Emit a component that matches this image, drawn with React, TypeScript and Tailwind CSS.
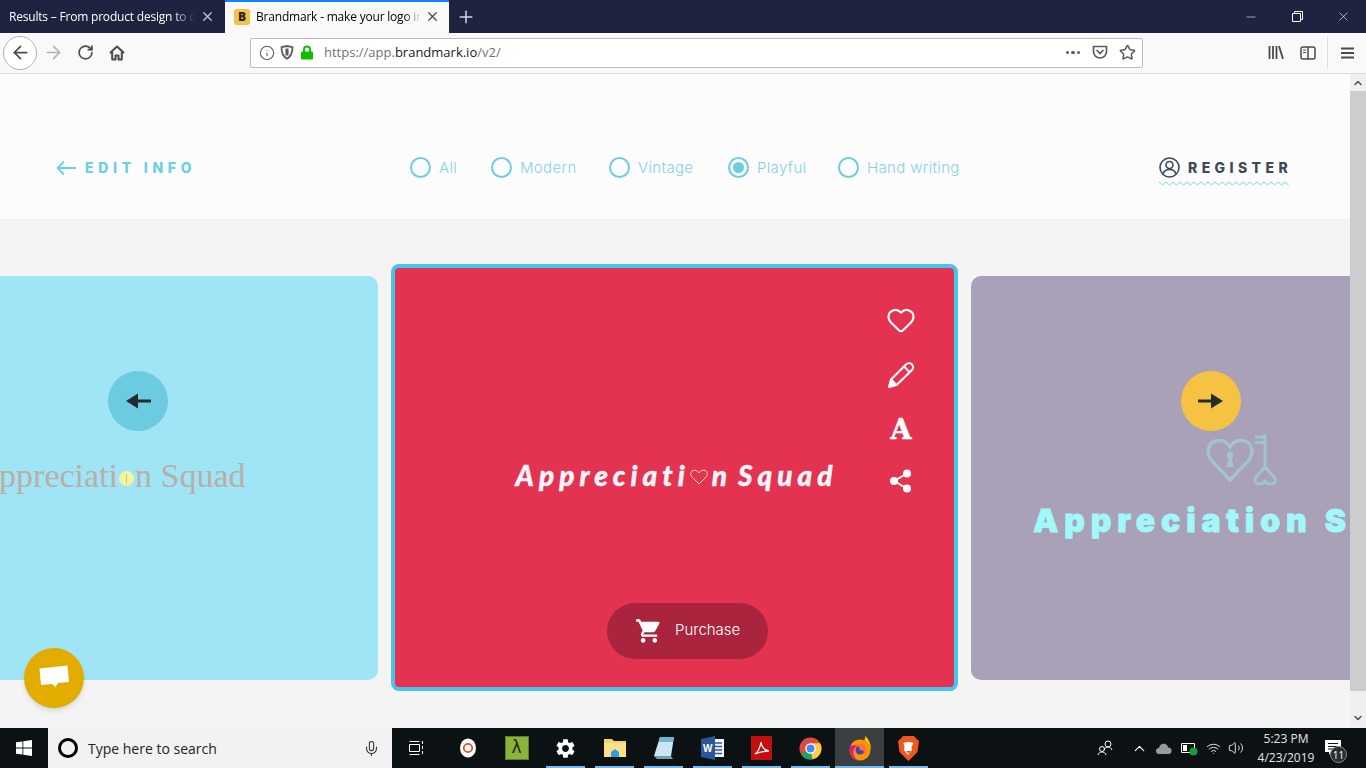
import React from "react";
import { MdShoppingCart, MdSettings } from "react-icons/md";
import { ArrowLeft, ArrowRight, RotateCw, X, Plus, Minus, Info, Heart, Star, ChevronUp, Mic, Volume2, Wifi } from "lucide-react";

const BODY = "font-['Inter','Liberation_Sans',sans-serif]";

const ArrowButton = ({ dir, className }: { dir: "left" | "right"; className: string }) => (
  <div className={`absolute top-[95px] flex h-[60px] w-[60px] items-center justify-center rounded-full ${className}`}>
    <svg width="26" height="18" viewBox="0 0 26 18" className={dir === "left" ? "rotate-180" : ""}>
      <path d="M1 9h14" stroke="#252a31" strokeWidth="3" strokeLinecap="round" />
      <path d="M13 1.5 25 9l-12 7.5z" fill="#252a31" />
    </svg>
  </div>
);

const RadioOption = ({ label, checked, className }: { label: string; checked?: boolean; className: string }) => (
  <div className={`flex items-center ${className}`}>
    <span className="flex h-[21px] w-[21px] shrink-0 items-center justify-center rounded-full border-[2.5px] border-[#6dcde0]">
      {checked && <span className="h-[11px] w-[11px] rounded-full bg-[#6dcde0]" />}
    </span>
    <span className="ml-[8px] whitespace-nowrap pt-[2px] text-[15px] font-light tracking-[0.35px] text-[#86d3e4]">{label}</span>
  </div>
);

const TaskIcon = ({ children, active, open }: { children: React.ReactNode; active?: boolean; open?: boolean }) => (
  <div className={`relative flex h-full w-[49px] items-center justify-center ${active ? "bg-[#3b3f42]" : ""}`}>
    {children}
    {open && <span className={`absolute bottom-0 h-[2px] bg-[#76b9ed] ${active ? "inset-x-0" : "left-[5px] right-[5px]"}`} />}
  </div>
);

const ToolButton = ({ children }: { children: React.ReactNode }) => (
  <div className="flex h-[32px] w-[32px] items-center justify-center text-[#4a4a4f]">{children}</div>
);

const TopBar = () => (
  <div className="flex h-[33px] shrink-0 bg-[#202340] text-[12px] font-['Open_Sans',sans-serif]">
    <div className="relative flex w-[225px] items-center pl-[9px] tracking-[-0.2px] text-white">
      <span className="w-[186px] overflow-hidden whitespace-nowrap [mask-image:linear-gradient(to_right,black_88%,transparent)]">
        Results – From product design to de
      </span>
      <X size={15} strokeWidth={2} className="absolute left-[200px] text-[#c8c9d2]" />
    </div>
    <div className="relative flex w-[224px] items-center border-t-2 border-[#0a84ff] bg-[#f9f9fa] pb-[2px] pl-[9px] tracking-[-0.2px] text-black">
      <span className="flex h-[16px] w-[16px] items-center justify-center rounded-[3px] bg-[#f5c242] text-[12px] font-black text-[#252a31]">B</span>
      <span className="ml-[6px] w-[165px] overflow-hidden whitespace-nowrap [mask-image:linear-gradient(to_right,black_90%,transparent)]">
        Brandmark - make your logo in
      </span>
      <X size={15} strokeWidth={2} className="absolute left-[200px] text-[#4a4a4f]" />
    </div>
    <div className="flex w-[34px] items-center justify-center text-[#d4d5dc]">
      <Plus size={20} strokeWidth={1.8} />
    </div>
    <div className="ml-auto flex items-center text-white">
      <div className="flex w-[46px] justify-center"><Minus size={14} strokeWidth={1} /></div>
      <div className="flex w-[46px] justify-center">
        <svg width="11" height="11" viewBox="0 0 11 11" fill="none" stroke="white">
          <path d="M.5 2.5h8v8h-8zM2.5 2.5v-2h8v8h-2" />
        </svg>
      </div>
      <div className="flex w-[46px] justify-center"><X size={15} strokeWidth={1} /></div>
    </div>
  </div>
);

const NavBar = () => (
  <div className="flex h-[41px] shrink-0 items-center border-b border-[#dcdcdc] bg-[#f9f9fa] pb-[1px]">
    <div className="ml-[3px] flex h-[34px] w-[34px] items-center justify-center rounded-full border border-[#b1b1b1] bg-white text-[#4a4a4f]">
      <ArrowLeft size={21} strokeWidth={2} />
    </div>
    <ToolButton><ArrowRight size={21} strokeWidth={1.8} className="text-[#b3b3b5]" /></ToolButton>
    <ToolButton><RotateCw size={17} strokeWidth={2.4} /></ToolButton>
    <ToolButton>
      <svg width="16" height="16" viewBox="0 0 16 16" fill="none" stroke="#4a4a4f" strokeWidth="2" strokeLinejoin="round">
        <path d="M1 8 8 1.5 15 8M3.2 7v7.5h3.3v-4h3v4h3.3V7" />
      </svg>
    </ToolButton>
    <div className="ml-[117px] flex h-[30px] w-[893px] items-center rounded-[2px] border border-[#bcbcbc] bg-white pl-[8px] pr-[6px] text-[13px] font-['Open_Sans',sans-serif]">
      <Info size={16} strokeWidth={1.6} className="text-[#5b5b5f]" />
      <svg width="14" height="15" viewBox="0 0 14 15" className="ml-[5px]" fill="none" stroke="#5b5b5f" strokeWidth="1.8">
        <path d="M1.5 2.2 7 1l5.5 1.2c0 5-1 9-5.5 11.5C2.500 11.200 1.500 7.200 1.500 2.200z" />
        <path d="M7 3.500v7" strokeWidth="3" />
      </svg>
      <svg width="14" height="15" viewBox="0 0 14 15" className="ml-[6px]">
        <path d="M4 7V4.500a3 3 0 0 1 6 0V7" fill="none" stroke="#12bc00" strokeWidth="2" />
        <rect x="1" y="6.500" width="12" height="8" rx="1" fill="#12bc00" />
      </svg>
      <span className="ml-[10px] pt-[1px] text-[#737373]">https://app.<span className="text-[#1a1a1a]">brandmark.io</span>/v2/</span>
      <div className="ml-auto flex items-center text-[#5b5b5f]">
        <span className="flex gap-[2px]">
          <span className="h-[3.500px] w-[3.500px] rounded-full bg-[#5b5b5f]" />
          <span className="h-[3.500px] w-[3.500px] rounded-full bg-[#5b5b5f]" />
          <span className="h-[3.500px] w-[3.500px] rounded-full bg-[#5b5b5f]" />
        </span>
        <svg width="16" height="15" viewBox="0 0 16 15" fill="none" stroke="#5b5b5f" strokeWidth="1.700" className="ml-[12px]">
          <path d="M1.500 1.500h13v5a6.500 6.500 0 0 1-13 0z" />
          <path d="M5 5.500 8 8.500l3-3" strokeLinecap="round" />
        </svg>
        <Star size={17} strokeWidth={2.2} className="ml-[11px]" />
      </div>
    </div>
    <div className="ml-[117px]"><ToolButton>
      <svg width="16" height="15" viewBox="0 0 16 15" stroke="#4a4a4f" strokeWidth="1.800" fill="none">
        <path d="M1.500 1v13M5 1v13M8.500 1v13M11 1l4 13" />
      </svg>
    </ToolButton></div>
    <ToolButton>
      <svg width="16" height="14" viewBox="0 0 16 14" stroke="#4a4a4f" fill="none" strokeWidth="1.500">
        <rect x="1" y="1" width="14" height="12" rx="2" />
        <path d="M8 1v12" />
        <path d="M3 4h3M3 6.500h3" strokeWidth="1.200" />
      </svg>
    </ToolButton>
    <span className="ml-[3px] h-[32px] w-px bg-[#dedede]" />
    <div className="flex flex-1 justify-center">
      <svg width="13" height="12" viewBox="0 0 13 12" stroke="#4a4a4f" strokeWidth="1.800">
        <path d="M0 1.500h13M0 6h13M0 10.500h13" />
      </svg>
    </div>
  </div>
);

const PageHeader = () => (
  <div className={`flex h-[145px] shrink-0 items-center bg-[#fcfcfc] pl-[56px] pt-[42px] ${BODY}`}>
    <div className="flex w-[138px] items-center">
      <svg width="20" height="16" viewBox="0 0 20 16" fill="none" stroke="#6dcfe3" strokeWidth="1.800" className="shrink-0">
        <path d="M20 8H1.500M8 1.500 1.500 8 8 14.500" />
      </svg>
      <span className="ml-[9px] whitespace-nowrap text-[14px] font-extrabold tracking-[4.700px] text-[#6dcfe3]">EDIT INFO</span>
    </div>
    <div className="ml-[216px] flex">
      <RadioOption label="All" className="w-[81px]" />
      <RadioOption label="Modern" className="w-[118px]" />
      <RadioOption label="Vintage" className="w-[119px]" />
      <RadioOption label="Playful" checked className="w-[110px]" />
      <RadioOption label="Hand writing" className="w-[122px]" />
    </div>
    <div className="relative ml-[199px] flex items-center">
      <svg width="21" height="21" viewBox="0 0 21 21" fill="none" stroke="#3d4a58" strokeWidth="1.600" className="shrink-0">
        <circle cx="10.500" cy="10.500" r="9.500" />
        <circle cx="10.500" cy="8" r="3.500" />
        <path d="M4 17c1-3.500 3.500-4.500 6.500-4.500S16 13.500 17 17" />
      </svg>
      <span className="ml-[8px] whitespace-nowrap text-[14px] font-extrabold tracking-[4.400px] text-[#3d4a58]">REGISTER</span>
      <svg width="134" height="5" viewBox="0 0 134 5" className="absolute left-0 top-[24px]" fill="none" stroke="#7fd3e5">
        <path d="M0 1l3.500 3 3.500-3 3.500 3 3.500-3 3.500 3 3.500-3 3.500 3 3.500-3 3.500 3 3.500-3 3.500 3 3.500-3 3.500 3 3.500-3 3.500 3 3.500-3 3.500 3 3.500-3 3.500 3 3.500-3 3.500 3 3.500-3 3.500 3 3.500-3 3.500 3 3.500-3 3.500 3 3.500-3 3.500 3 3.500-3 3.500 3 3.500-3 3.500 3 3.500-3 3.500 3 3.500-3 3.500 3" />
      </svg>
    </div>
  </div>
);

const LeftCard = () => (
  <div className="relative flex h-[404px] w-[540px] shrink-0 items-center justify-center rounded-r-[10px] bg-[#9fe5f5]">
    <ArrowButton dir="left" className="right-[210px] bg-[#6ccbdf]" />
    <div className="flex items-center whitespace-nowrap pb-[4px] pl-[4px] font-['Liberation_Serif',serif] text-[34px] leading-none text-[#b9aea8]">
      Appreciati
      <span className="relative mx-[1px] mt-[5px] flex h-[15px] w-[15px] items-center justify-center rounded-full bg-[#f4f59b]">
        <span className="h-[9px] w-px bg-[#b9c9a8]" />
      </span>
      n Squad
    </div>
  </div>
);

const CenterCard = () => (
  <div className="relative flex h-[427px] w-[567px] shrink-0 items-center justify-center rounded-[8px] border-[4px] border-[#45c4ec] bg-[#e33351] text-white">
    <div className="flex items-center whitespace-nowrap pb-[5px] pl-[4px] font-['Lato',sans-serif] text-[28px] font-black italic leading-none tracking-[5px] text-[#f9f5fb] [word-spacing:-5px] [-webkit-text-stroke:0.4px_#f9f5fb]">
      Appreciati
      <svg width="18" height="16" viewBox="0 0 18 16" fill="none" stroke="#f5d2c8" strokeWidth="1" className="mr-[4px] mt-[3px]">
        <path d="M9 15 2 8C0 6 .5 2.500 3 1.500 5.500.500 8 2 9 4c1-2 3.500-3.500 6-2.500s3 4.500 1 6.500z" />
      </svg>
      n Squad
    </div>
    <div className="absolute left-[491px] top-[37px] flex w-[30px] flex-col items-center">
      <Heart size={30} strokeWidth={1.700} />
      <svg width="27" height="27" viewBox="0 0 27 27" fill="none" stroke="white" strokeWidth="2" strokeLinejoin="round" className="mt-[26px]">
        <path d="M1.500 25.500 3.500 18 18 3.500a4 4 0 0 1 6 5.500L9 23.500z" />
        <path d="M16 5.500l5.500 5.500" />
        <path d="M1 26l2-7.500 5.500 5.500z" fill="white" />
      </svg>
      <span className="mt-[27px] h-[30px] font-['DejaVu_Serif',serif] text-[27px] font-bold leading-[30px] [-webkit-text-stroke:0.6px_white]">A</span>
      <svg width="24" height="24" viewBox="0 0 24 24" className="mt-[24px]" fill="white" stroke="white" strokeWidth="2">
        <circle cx="18" cy="4.500" r="3" />
        <circle cx="5" cy="12" r="3" />
        <circle cx="18" cy="19.500" r="3" />
        <path d="M18 4.500 5 12l13 7.500" fill="none" />
      </svg>
    </div>
    <div className="absolute left-[212px] top-[335px] flex h-[56px] w-[161px] items-center rounded-full bg-[#a9243c] pb-[1px] pl-[28px] font-['Inter',sans-serif] text-[15px] font-light">
      <MdShoppingCart size={28} />
      <span className="ml-[12px]">Purchase</span>
    </div>
  </div>
);

const RightCard = () => (
  <div className="relative h-[404px] w-[540px] shrink-0 overflow-hidden rounded-l-[10px] bg-[#a8a1b7]">
    <ArrowButton dir="right" className="left-[210px] bg-[#f5c242]" />
    <svg width="72" height="52" viewBox="0 0 72 52" className="absolute left-[235px] top-[158px]" fill="none" stroke="#a2c3d2" strokeWidth="3.500">
      <path d="M24 46 5 26C-1 17 3 7 12 6.500c5-.300 9.500 2 12 6.500 2.500-4.500 7-6.800 12-6.500C45 7 49 17 43 26z" />
      <circle cx="24" cy="21" r="3.500" fill="#a2c3d2" stroke="none" />
      <path d="M22.500 22 20.500 33h7L25.500 22z" fill="#a2c3d2" stroke="none" />
      <path d="M59 0v33M49 3h10M49 8.500h10" strokeWidth="3" />
      <path d="M59 33 50 43c-3 4 0 7 3 7 3 0 5-1 6-3 1 2 3 3 6 3 3 0 6-3 3-7z" strokeWidth="3" strokeLinejoin="round" />
    </svg>
    <div className="absolute left-[62px] top-[229px] whitespace-nowrap font-['Inter',sans-serif] text-[32px] font-black leading-none tracking-[5.800px] text-[#a2f7f9] [-webkit-text-stroke:0.8px_#a2f7f9]">
      Appreciation Squad
    </div>
  </div>
);

const Scrollbar = () => (
  <div className="flex w-[16px] shrink-0 flex-col bg-[#f0f0f0]">
    <div className="flex h-[17px] items-center justify-center text-[#505050]"><ChevronUp size={12} strokeWidth={3} /></div>
    <div className="h-[600px] bg-[#cdcdcd]" />
    <div className="flex flex-1 items-end justify-center pb-[4px]">
      <ChevronUp size={12} strokeWidth={3} className="rotate-180 text-[#505050]" />
    </div>
  </div>
);

const Taskbar = () => (
  <div className="flex h-[40px] shrink-0 items-center bg-[#0c1114] font-['Open_Sans',sans-serif] text-white">
    <div className="flex h-full w-[48px] items-center justify-center">
      <svg width="16" height="16" viewBox="0 0 16 16" fill="white">
        <path d="M0 2.300 6.500 1.400v6.200H0zM7.300 1.300 16 0v7.600H7.300zM0 8.400h6.500v6.200L0 13.700zM7.300 8.400H16V16l-8.700-1.300z" />
      </svg>
    </div>
    <div className="flex h-full w-[344px] items-center bg-[#f2f2f2] pl-[10px] text-[14px] text-[#222]">
      <span className="h-[20px] w-[20px] rounded-full border-[3px] border-black" />
      <span className="ml-[10px]">Type here to search</span>
      <Mic size={17} strokeWidth={1.500} className="ml-auto mr-[12px] text-[#333]" />
    </div>
    <TaskIcon>
      <svg width="16" height="16" viewBox="0 0 16 16" fill="none" stroke="white">
        <path d="M.5 4.500h10v7H.5zM.5 1.500h10M.5 14.500h10M13.500 1v3M13.500 6v3M13.500 11v3" />
      </svg>
    </TaskIcon>
    <span className="w-[2px]" />
    <TaskIcon>
      <svg width="16" height="20" viewBox="0 0 16 20">
        <ellipse cx="8" cy="10" rx="8" ry="9.500" fill="white" />
        <circle cx="8" cy="10" r="4.200" fill="none" stroke="#e95420" strokeWidth="1.800" />
      </svg>
    </TaskIcon>
    <TaskIcon>
      <span className="flex h-[24px] w-[24px] items-center justify-center border border-[#5d7f24] bg-[#8ab53a] text-[17px] text-[#1d2a0a] font-['DejaVu_Sans',sans-serif]">λ</span>
    </TaskIcon>
    <TaskIcon open><MdSettings size={23} /></TaskIcon>
    <TaskIcon open>
      <svg width="22" height="20" viewBox="0 0 22 20">
        <path d="M0 1h8l2 2h12v16H0z" fill="#f6d365" />
        <path d="M0 5h22v14H0z" fill="#fce08c" />
        <path d="M7 19v-5l4-3 4 3v5z" fill="#2f9ee0" />
      </svg>
    </TaskIcon>
    <TaskIcon open>
      <svg width="22" height="24" viewBox="0 0 22 24">
        <path d="M7 1h14l-3 19H1z" fill="#c9e6f2" />
        <path d="M7 1h14l-1 5H6z" fill="#6db5d5" />
        <path d="M1 20l17 0 2 3H4z" fill="#7b9aa8" />
      </svg>
    </TaskIcon>
    <TaskIcon open>
      <svg width="23" height="24" viewBox="0 0 23 24">
        <rect x="7" y="3" width="16" height="18" fill="#f3f5f9" />
        <path d="M14 7h7M14 10.500h7M14 14h7M14 17.500h7" stroke="#2b579a" strokeWidth="1.500" />
        <path d="M0 3 14 0v24L0 21z" fill="#2b579a" />
        <text x="2" y="16" fontSize="10" fontWeight="700" fill="white" fontFamily="Liberation Sans">W</text>
      </svg>
    </TaskIcon>
    <TaskIcon open>
      <svg width="21" height="24" viewBox="0 0 21 24">
        <rect width="21" height="24" fill="#c40d0d" />
        <path d="M4 18c3-2 5-6 6-12 .500 5 3 8 8 9-5 0-9 1-14 3z" fill="none" stroke="white" strokeWidth="1.300" />
      </svg>
    </TaskIcon>
    <TaskIcon open>
      <svg width="23" height="23" viewBox="0 0 24 24">
        <circle cx="12" cy="12" r="11.500" fill="#dd4b3e" />
        <path d="M12 12 2 18A11.500 11.500 0 0 0 14 23.300z" fill="#1da462" />
        <path d="M12 6.500h10A11.500 11.500 0 0 1 14 23.300L12 12z" fill="#ffcd46" />
        <circle cx="12" cy="12" r="5.500" fill="white" />
        <circle cx="12" cy="12" r="4.200" fill="#4a8af4" />
      </svg>
    </TaskIcon>
    <TaskIcon active open>
      <svg width="22" height="25" viewBox="0 0 22 25">
        <ellipse cx="11" cy="14" rx="10.500" ry="10.500" fill="#ff9400" />
        <path d="M11 3.500C17 3.500 21.500 8.500 21.500 14 22.500 9 20 3 16 0c.800 2.500-.500 4-1.500 4.500C13.500 3.800 12 3.500 11 3.500z" fill="#ffcb00" />
        <path d="M1 10c-1.500 7 3 14.500 10 14.500-5-1-7.500-5-6.500-9.500C5 13 6 11 8 9.500 5 9 2.500 9 1 10z" fill="#e31587" />
        <circle cx="11" cy="14" r="4.500" fill="#4c3fb5" />
        <path d="M7 8.500c4-1.800 10 0 10.500 5 .200 3-1.500 5.500-3.500 6.500 1.200-2 1.300-4 .300-5.500C12 15 10 13.500 10.500 11.500z" fill="#ff7139" />
      </svg>
    </TaskIcon>
    <TaskIcon open>
      <svg width="21" height="25" viewBox="0 0 21 25">
        <path d="M5 0h11l2 2.500L21 5l-1.500 11L10.500 25 1.500 16 0 5l3-2.500z" fill="#f1561f" />
        <path d="M5.500 7 9 6h3l3.500 1-2 4 .500 3-4 5-4-5 .500-3z" fill="white" />
        <path d="M8 15h5l-2.500 2.500z" fill="#f1561f" />
      </svg>
    </TaskIcon>
    <div className="ml-auto flex h-full items-center pr-[16px] text-[12px]">
      <svg width="16" height="16" viewBox="0 0 16 16" fill="none" stroke="white" className="mr-[18px]">
        <circle cx="11" cy="4" r="3" />
        <path d="M7 10c1-2 2-3 4-3s3 1 4 3" />
        <circle cx="5" cy="9" r="2.500" />
        <path d="M1 15c.500-2 2-3 4-3s3.500 1 4 3" />
      </svg>
      <ChevronUp size={17} strokeWidth={1.500} className="mr-[8px]" />
      <svg width="16" height="11" viewBox="0 0 16 11" fill="#9a9a9a" className="mr-[9px]">
        <path d="M3 11a3 3 0 0 1 0-6c.500-3 3-5 6-4 2 .500 3 2 3 3.500a3.300 3.300 0 0 1 1 6.500z" />
      </svg>
      <svg width="17" height="15" viewBox="0 0 17 15" fill="none" stroke="white" className="mr-[8px]">
        <path d="M.5 2.500h13v9H.5z" />
        <path d="M2 4h4v6H2z" fill="white" stroke="none" />
        <circle cx="12.500" cy="10.500" r="4" fill="#1a9c3e" stroke="none" />
      </svg>
      <Wifi size={15} strokeWidth={1.600} className="mr-[7px] text-[#d8d8d8]" />
      <Volume2 size={16} strokeWidth={1.400} className="text-[#e8e8e8]" />
      <div className="ml-[11px] flex w-[62px] flex-col items-center text-[12px] leading-[19px] text-[#e6e6e6]">
        <span>5:23 PM</span>
        <span>4/23/2019</span>
      </div>
      <div className="relative flex w-[33px] justify-center">
        <svg width="17" height="16" viewBox="0 0 17 16" fill="white">
          <path d="M0 0h16v12H6l-2 3v-3H0z" />
          <path d="M3 3.500h10M3 6.500h10M3 9h10" stroke="#0c1114" />
        </svg>
        <span className="absolute left-[13px] top-[6px] flex h-[17px] w-[17px] items-center justify-center rounded-full border border-[#888] bg-[#2d2d2d] text-[10px] leading-none">11</span>
      </div>
    </div>
  </div>
);

export default function App() {
  return (
    <div className="flex h-[768px] w-[1366px] flex-col overflow-hidden bg-[#f4f4f4]">
      <TopBar />
      <NavBar />
      <div className="flex min-h-0 flex-1">
        <div className="relative flex w-[1350px] flex-col overflow-hidden bg-[#f4f4f4]">
          <PageHeader />
          <div className="-ml-[162px] mt-[45px] flex w-max items-center gap-[13px]">
            <LeftCard />
            <CenterCard />
            <RightCard />
          </div>
          {/* chat bubble sits over the carousel */}
          <div className="absolute bottom-[20px] left-[24px] flex h-[60px] w-[60px] items-center justify-center rounded-full bg-[#e2ac00] shadow-md">
            <svg width="30" height="26" viewBox="0 0 30 26" fill="white">
              <path d="M.500 3.500 28.500.500 30 17 19 18l-2.500 4-3.500-3L2 20z" />
            </svg>
          </div>
        </div>
        <Scrollbar />
      </div>
      <Taskbar />
    </div>
  );
}
